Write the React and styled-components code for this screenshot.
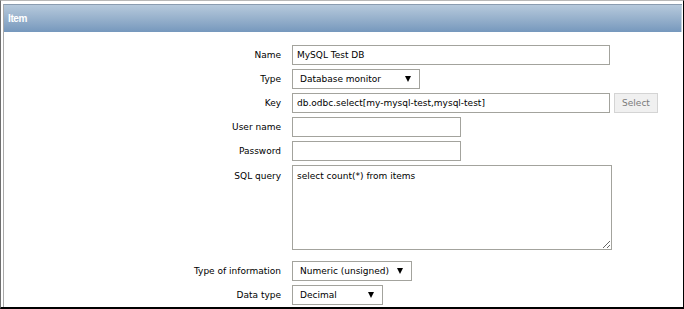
import styled, { createGlobalStyle } from "styled-components";

const GlobalStyle = createGlobalStyle`
  html, body {
    margin: 0;
    padding: 0;
    background: #ffffff;
  }
  body {
    font-family: "DejaVu Sans", Verdana, sans-serif;
    font-size: 9px;
    color: #000;
  }
`;

const fields = [
  { label: "Name", kind: "input", value: "MySQL Test DB", width: 318 },
  { label: "Type", kind: "select", value: "Database monitor", width: 128 },
  { label: "Key", kind: "key", value: "db.odbc.select[my-mysql-test,mysql-test]", width: 318 },
  { label: "User name", kind: "input", value: "", width: 169 },
  { label: "Password", kind: "input", value: "", width: 169 },
  { label: "SQL query", kind: "textarea", value: "select count(*) from items", width: 320 },
  { label: "Type of information", kind: "select", value: "Numeric (unsigned)", width: 120 },
  { label: "Data type", kind: "select", value: "Decimal", width: 91 },
];

const App = () => {
  return (
    <>
      <GlobalStyle />
      <Frame>
        <Panel>
          <Header>Item</Header>
          <Form>
            {fields.map((f) => (
              <Row key={f.label}>
                <Label $top={f.kind === "textarea"}>{f.label}</Label>
                <Field $tall={f.kind === "textarea"}>
                  {f.kind === "input" && (
                    <Input $w={f.width} defaultValue={f.value} />
                  )}
                  {f.kind === "key" && (
                    <>
                      <Input $w={f.width} defaultValue={f.value} />
                      <Button>Select</Button>
                    </>
                  )}
                  {f.kind === "select" && (
                    <Select $w={f.width}>
                      <span>{f.value}</span>
                      <svg width="6" height="6" viewBox="0 0 6 6">
                        <polygon points="0,0 6,0 3,6" fill="#000" />
                      </svg>
                    </Select>
                  )}
                  {f.kind === "textarea" && (
                    <TextArea $w={f.width} defaultValue={f.value} />
                  )}
                </Field>
              </Row>
            ))}
          </Form>
        </Panel>
      </Frame>
    </>
  );
};

export default App;

const Frame = styled.div`
  width: 684px;
  height: 309px;
  box-sizing: border-box;
  border-top: 1px solid #b8b8b8;
  border-left: 1px solid #6e6e6e;
  border-right: 1px solid #000;
  border-bottom: 2px solid #000;
  padding: 3px 1px 0 2px;
  overflow: hidden;
`;

const Panel = styled.div`
  height: 100%;
  box-sizing: border-box;
  border-top: 1px solid #8a9cb0;
  border-left: 1px solid #a9a9a9;
  display: flex;
  flex-direction: column;
`;

const Header = styled.div`
  height: 27px;
  flex: none;
  display: flex;
  align-items: center;
  padding-left: 4px;
  background: linear-gradient(to bottom, #b6c9dc 0%, #97b1cc 50%, #7698bd 100%);
  color: #fff;
  font-family: "Liberation Sans", Arial, sans-serif;
  font-weight: bold;
  font-size: 10px;
  letter-spacing: -0.4px;
  border-right: 1px solid #c5d3e0;
`;

const Form = styled.div`
  display: flex;
  flex-direction: column;
  gap: 4px;
  padding-top: 13px;
`;

const Row = styled.div`
  display: grid;
  grid-template-columns: 277px auto;
  column-gap: 11px;
  align-items: center;
`;

const Label = styled.div`
  text-align: right;
  white-space: nowrap;
  align-self: ${(p) => (p.$top ? "start" : "center")};
  padding-top: ${(p) => (p.$top ? "6px" : "0")};
`;

const Field = styled.div`
  display: flex;
  align-items: center;
  gap: 4px;
  padding-bottom: ${(p) => (p.$tall ? "7px" : "0")};
`;

const boxBase = `
  box-sizing: border-box;
  border: 1px solid #a3a39d;
  background: #fff;
  font-family: "DejaVu Sans", Verdana, sans-serif;
  font-size: 9px;
  color: #000;
  outline: none;
  margin: 0;
`;

const Input = styled.input`
  ${boxBase}
  width: ${(p) => p.$w}px;
  height: 20px;
  padding: 0 4px;
`;

const TextArea = styled.textarea`
  ${boxBase}
  width: ${(p) => p.$w}px;
  height: 85px;
  padding: 5px 4px;
  resize: both;
`;

const Select = styled.div`
  ${boxBase}
  width: ${(p) => p.$w}px;
  height: 20px;
  display: flex;
  align-items: center;
  justify-content: space-between;
  padding: 0 8px 0 7px;
`;

const Button = styled.div`
  box-sizing: border-box;
  width: 44px;
  height: 20px;
  display: flex;
  align-items: center;
  justify-content: center;
  background: #f0f0f0;
  border: 1px solid #d4d4d4;
  color: #7a7a7a;
  font-size: 9px;
`;
